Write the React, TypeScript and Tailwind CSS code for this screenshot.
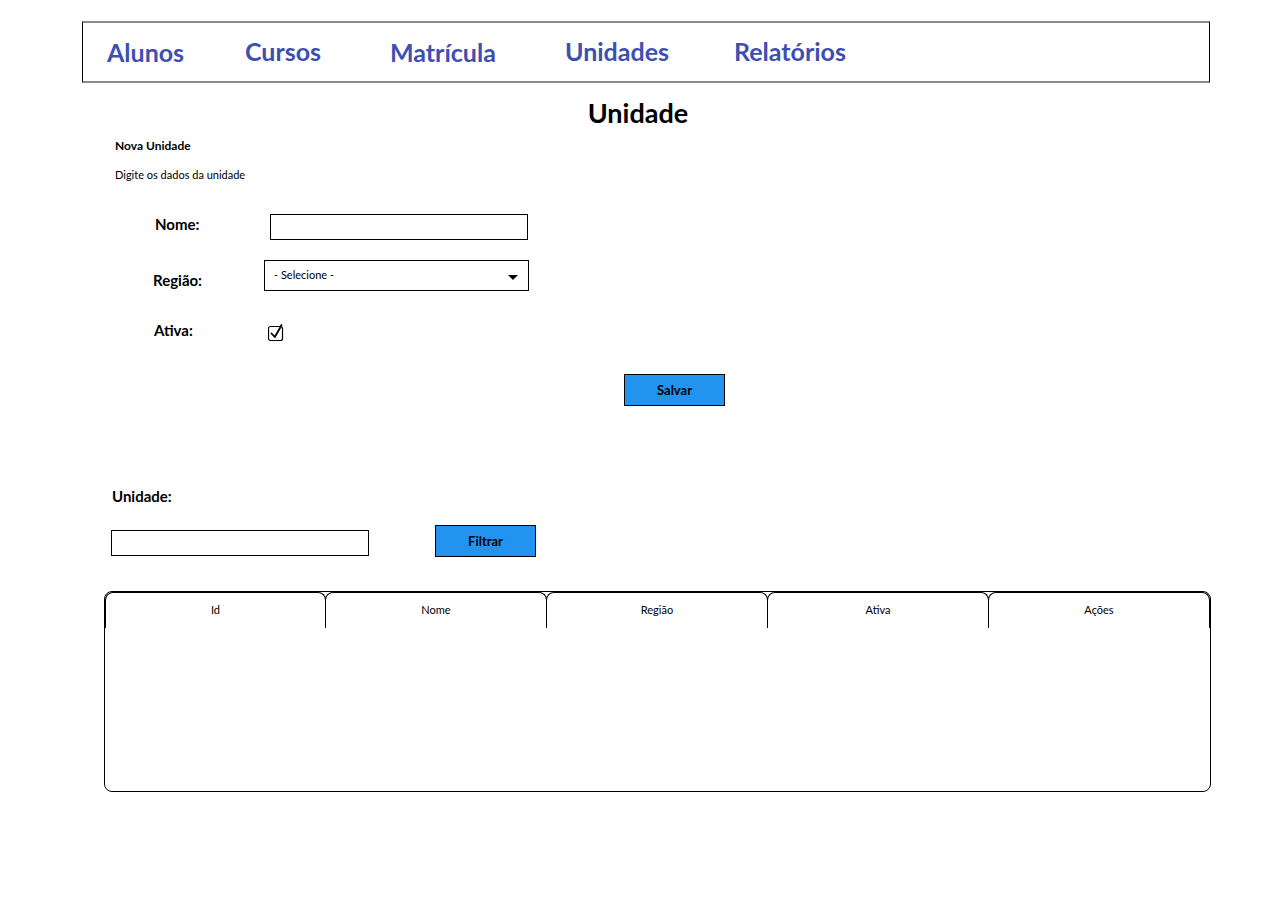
import type { FC } from 'react';

const font = { fontFamily: 'Lato, "Open Sans", sans-serif' };

const navItems = [
  { label: 'Alunos', w: 'w-[138px]', mt: 'mt-[2px]' },
  { label: 'Cursos', w: 'w-[145px]', mt: 'mt-0' },
  { label: 'Matrícula', w: 'w-[175px]', mt: 'mt-[1px]' },
  { label: 'Unidades', w: 'w-[169px]', mt: 'mt-0' },
  { label: 'Relatórios', w: 'w-[160px]', mt: 'mt-0' },
];

const columns = ['Id', 'Nome', 'Região', 'Ativa', 'Ações'];

const CheckIcon: FC = () => (
  <svg width="18" height="20" viewBox="0 0 18 20" className="block">
    <rect x="0.5" y="4.5" width="14" height="14" rx="2" fill="white" stroke="black" strokeWidth="1.2" />
    <path d="M3.5 11.5 L6.8 15 L12 6 L13.5 3" fill="none" stroke="black" strokeWidth="1.8" strokeLinejoin="round" strokeLinecap="round" />
  </svg>
);

export default function App() {
  return (
    <div className="w-[1272px] h-[901px] bg-white text-black pt-[21px]" style={font}>
      {/* Menu */}
      <div className="ml-[82px] w-[1128px] h-[62px] border-t-2 border-b-2 border-t-[#8a8a8a] border-b-[#8a8a8a] border-l border-r border-l-black border-r-black flex items-center">
        <div className="flex items-center pl-[24px] text-[25px] font-bold text-[#3d4fb1]">
          {navItems.map((item) => (
            <div key={item.label} className={`${item.w} ${item.mt}`}>
              {item.label}
            </div>
          ))}
        </div>
      </div>

      {/* Titulo */}
      <div className="mt-[14px] w-[1272px] pl-[4px] text-center text-[27px] leading-[32px] font-bold">Unidade</div>

      <div className="mt-[9px] ml-[115px] text-[12px] leading-[16px] font-bold">Nova Unidade</div>
      <div className="mt-[14px] ml-[115px] text-[11px] leading-[14px]">Digite os dados da unidade</div>

      {/* Nome */}
      <div className="mt-[32px] flex items-start">
        <div className="ml-[155px] w-[115px] text-[15px] leading-[20px] font-bold">Nome:</div>
        <div className="w-[258px] h-[26px] border border-black bg-white"></div>
      </div>

      {/* Regiao */}
      <div className="mt-[20px] flex items-start">
        <div className="ml-[153px] w-[111px] mt-[10px] text-[15px] leading-[20px] font-bold">Região:</div>
        <div className="w-[265px] h-[31px] border border-black bg-white flex items-start justify-between pl-[9px] pr-[10px]">
          <span className="text-[11px] leading-[14px] mt-[7px]">- Selecione -</span>
          <svg width="10" height="6" viewBox="0 0 10 6" className="mt-[14px]">
            <path d="M0 0 H10 L5 5 Z" fill="black" />
          </svg>
        </div>
      </div>

      {/* Ativa */}
      <div className="mt-[29px] h-[22px] flex items-start">
        <div className="ml-[154px] w-[114px] text-[15px] leading-[20px] font-bold">Ativa:</div>
        <div className="mt-[2px]">
          <CheckIcon />
        </div>
      </div>

      {/* Salvar */}
      <div className="mt-[32px] ml-[624px] w-[101px] h-[32px] border border-black bg-[#2294f0] flex items-center justify-center pt-px text-[13px] font-bold">
        Salvar
      </div>

      {/* Filtro */}
      <div className="mt-[80px] ml-[112px] text-[15px] leading-[20px] font-bold">Unidade:</div>
      <div className="mt-[19px] flex items-start">
        <div className="ml-[111px] mt-[5px] w-[258px] h-[26px] border border-black bg-white"></div>
        <div className="ml-[66px] w-[101px] h-[32px] border border-black bg-[#2294f0] flex items-center justify-center pt-px text-[13px] font-bold">
          Filtrar
        </div>
      </div>

      {/* Tabela */}
      <div className="mt-[34px] ml-[104px] w-[1107px] h-[201px] border border-black rounded-[8px]">
        <div className="flex">
          {columns.map((col, i) => (
            <div
              key={col}
              className={`h-[36px] border-t border-x border-black rounded-t-[8px] flex items-start justify-center pt-[10px] text-[11px] leading-[14px] ${i > 0 ? '-ml-px w-[222px]' : 'w-[221px]'}`}
            >
              {col}
            </div>
          ))}
        </div>
      </div>
    </div>
  );
}
